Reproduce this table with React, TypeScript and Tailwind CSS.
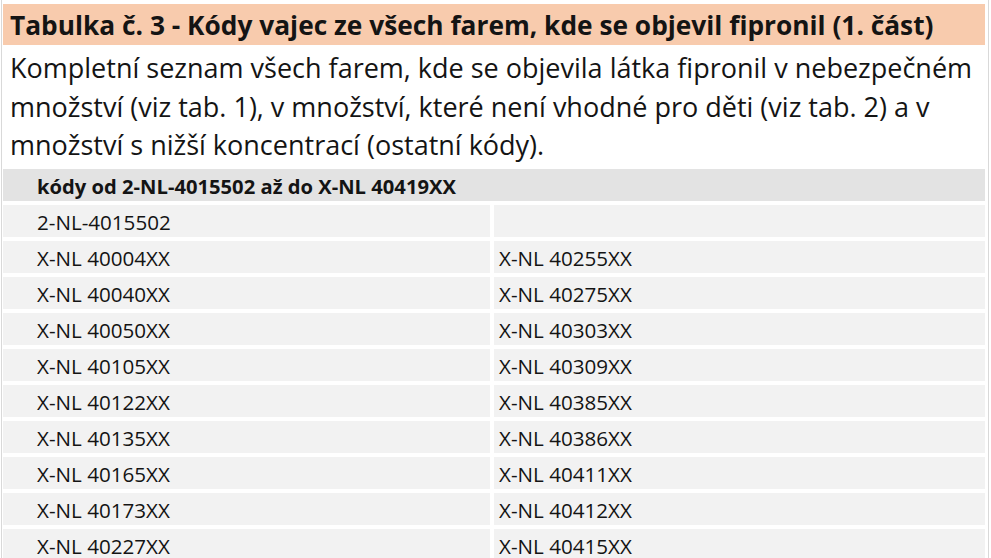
import React from "react";

const rows: [string, string][] = [
  ["2-NL-4015502", ""],
  ["X-NL 40004XX", "X-NL 40255XX"],
  ["X-NL 40040XX", "X-NL 40275XX"],
  ["X-NL 40050XX", "X-NL 40303XX"],
  ["X-NL 40105XX", "X-NL 40309XX"],
  ["X-NL 40122XX", "X-NL 40385XX"],
  ["X-NL 40135XX", "X-NL 40386XX"],
  ["X-NL 40165XX", "X-NL 40411XX"],
  ["X-NL 40173XX", "X-NL 40412XX"],
  ["X-NL 40227XX", "X-NL 40415XX"],
];

export default function App() {
  return (
    <div
      className="relative h-[558px] w-[991px] overflow-hidden bg-white text-[#141414] [font-variant-ligatures:none]"
      style={{ fontFamily: "'Open Sans', 'Liberation Sans', sans-serif" }}
    >
      {/* excel gridlines at the edges */}
      <div className="absolute left-[1px] top-0 h-full w-px bg-[#d9d9d9]" />
      <div className="absolute left-[988px] top-0 h-full w-px bg-[#d9d9d9]" />

      <div className="flex w-[982px] flex-col pl-[3px] pt-[4px] box-content">
        <div className="h-[41px] bg-[#f8cbad] px-[7px] pt-[1px] text-[26.3px] font-bold leading-[41px] whitespace-nowrap">
          Tabulka č. 3 - Kódy vajec ze všech farem, kde se objevil fipronil (1. část)
        </div>
        <div className="h-[124px] bg-white pl-[7px] pt-[4px] text-[27px] leading-[38.5px] whitespace-nowrap">
          Kompletní seznam všech farem, kde se objevila látka fipronil v nebezpečném
          <br />
          množství (viz tab. 1), v množství, které není vhodné pro děti (viz tab. 2) a v
          <br />
          množství s nižší koncentrací (ostatní kódy).
        </div>
        <div className="h-[32px] bg-[#e3e3e3] pl-[34px] pt-[1px] text-[20.2px] font-bold leading-[32px]">
          kódy od 2-NL-4015502 až do X-NL 40419XX
        </div>
        <div className="mt-[4px] grid grid-cols-[487px_1fr] gap-[4px] text-[20.6px]">
          {rows.map(([a, b], i) => (
            <React.Fragment key={i}>
              <div className="h-[32px] bg-[#f2f2f2] pl-[34px] pt-[1px] leading-[32px]">{a}</div>
              <div className="h-[32px] bg-[#f2f2f2] pl-[5px] pt-[1px] leading-[32px]">{b}</div>
            </React.Fragment>
          ))}
        </div>
      </div>
    </div>
  );
}
